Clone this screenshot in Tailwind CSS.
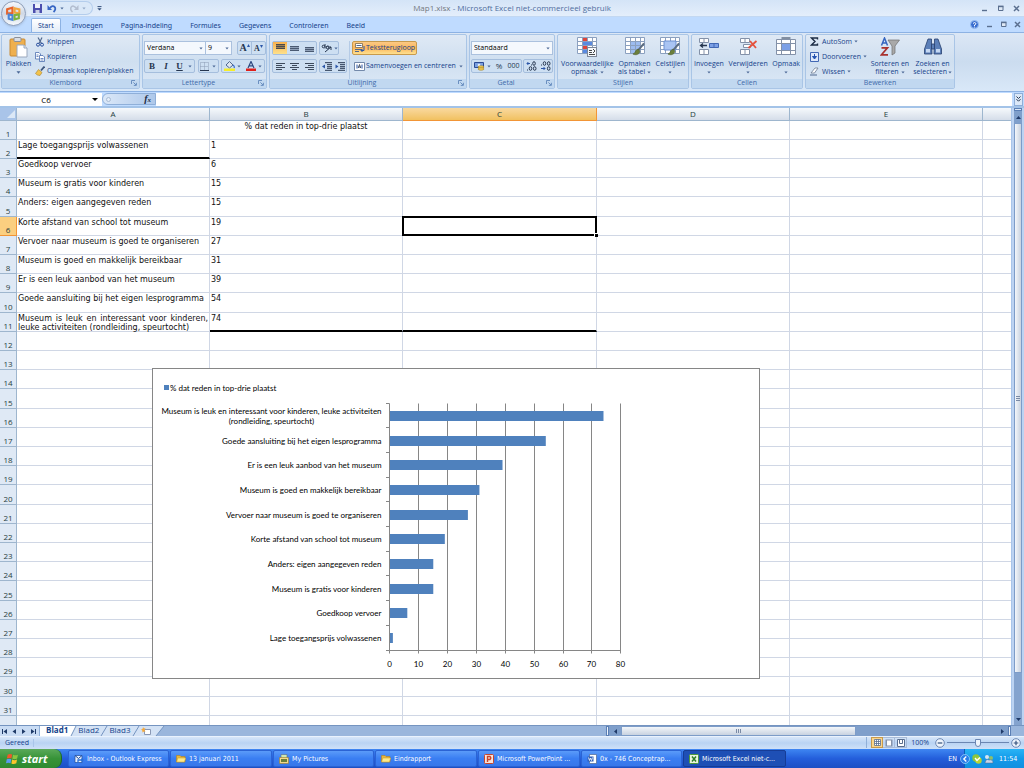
<!DOCTYPE html>
<html lang="nl">
<head>
<meta charset="utf-8">
<title>Map1.xlsx - Microsoft Excel niet-commercieel gebruik</title>
<script src="https://cdn.jsdelivr.net/npm/@tailwindcss/browser@4"></script>
</head>
<body class="flex h-screen flex-col overflow-hidden bg-[#bfdbff] font-['Open_Sans','Noto_Sans',sans-serif] text-[7px] leading-[8px] text-[#15428b]">

<svg class="hidden">
  <defs>
    <symbol id="dn" viewBox="0 0 5 3"><path d="M.5 .3h4L2.500 2.800z" fill="#4a6796"/></symbol>
    <symbol id="launch" viewBox="0 0 6 6"><path d="M.5 4V.5H4" fill="none" stroke="#6a8fc0"/><path d="M2.400 2.400l2.600 2.600M5.400 2.800v2.600H2.800" fill="none" stroke="#6a8fc0"/></symbol>
    <symbol id="min" viewBox="0 0 7 7"><path d="M1 5.500h5" stroke="#5a6f8f" stroke-width="1.400"/></symbol>
    <symbol id="max" viewBox="0 0 7 7"><path d="M1.500 1.500h4.500v4h-4.500z" fill="#dfe9f5" stroke="#5a6f8f"/><path d="M1 1.400h5.500" stroke="#5a6f8f" stroke-width="1.600"/></symbol>
    <symbol id="cls" viewBox="0 0 7 7"><path d="M1 1l5 5M6 1L1 6" stroke="#5a6f8f" stroke-width="1.500"/></symbol>
    <symbol id="grid" viewBox="0 0 20 18"><path d="M.5 .5h19v16H.5z" fill="#fff" stroke="#8ba0bf"/><path d="M5.500 .5v16M10.500 .5v16M15.500 .5v16M.5 4.500h19M.5 8.500h19M.5 12.500h19" stroke="#8ba0bf" fill="none"/></symbol>
    <symbol id="brush" viewBox="0 0 14 14"><path d="M13 1L6.500 8.500" stroke="#5c6d80" stroke-width="2.200"/><path d="M7 7.500c-3-1-3 4-6 5 3 1.500 7 .5 7.500-3z" fill="#6b7f3a" stroke="#4b5a2a" stroke-width=".6"/></symbol>
    <symbol id="folder" viewBox="0 0 10 9"><path d="M.5 1.500h3.500l1 1H9v5.500H.5z" fill="#e9b63c" stroke="#b5851c" stroke-width=".6"/><path d="M1.800 4h8l-1.500 4H.6z" fill="#fde98a" stroke="#c79a2a" stroke-width=".5"/></symbol>
    <symbol id="flag" viewBox="0 0 12 11"><path d="M1.500 1.600Q3.500.3 5.700 1.400L5 5Q3 4 .8 5z" fill="#f0572c"/><path d="M6.500 1.600q2.200 1 4.500-.1L10.300 5Q8 6.200 5.800 5.200z" fill="#8cc63f"/><path d="M.7 5.800Q2.800 4.800 4.900 5.800L4.200 9.400Q2.200 8.400 0 9.400z" fill="#5a9bf0"/><path d="M5.600 6q2.300 1.100 4.600 0L9.500 9.500Q7.200 10.600 5 9.600z" fill="#fcc62c"/></symbol>
  </defs>
</svg>

<!-- Title bar -->
<header class="relative flex h-[17px] shrink-0 items-center border-b border-[#c3d8f2] bg-gradient-to-b from-[#d4e4f7] to-[#e4eefb] pl-[31px] pr-[4px]">
  <button aria-label="Office-knop" class="absolute left-[1px] top-[1px] z-10 flex size-[25px] items-center justify-center rounded-full border border-[#8c9db8] bg-gradient-to-b from-[#f7f9fc] via-[#cfd8e6] to-[#f6f9fd] shadow">
    <svg class="size-[17px]" viewBox="0 0 16 16" fill="none" stroke-width="2"><path d="M2 4l5-1.500v5L2 8z" stroke="#e8642a"/><path d="M9 3l4.500 1v4L9 7z" stroke="#f2a63b"/><path d="M3.500 9l3.500.5V14l-3.500-1z" stroke="#4a86d8"/><path d="M9 9.500l4-.5v3.500l-4 1z" stroke="#7db33c"/></svg>
  </button>
  <div class="flex h-[14px] items-center gap-[5px] rounded-r-full border border-[#b4cdec] border-l-0 bg-[#dae8f8] pl-[2px] pr-[6px]">
    <button aria-label="Opslaan"><svg class="size-[9px]" viewBox="0 0 9 9"><path d="M0 0h9v9H0z" fill="#4c4fae"/><path d="M2 0h5v4H2z" fill="#eef1fa"/><path d="M2.500 6h4v3h-4z" fill="#c9cfe8"/></svg></button>
    <button aria-label="Ongedaan maken" class="flex items-center gap-[3px]"><svg class="h-[9px] w-[10px]" viewBox="0 0 10 9"><path d="M3 4C6-.5 11 4 6.500 8" fill="none" stroke="#3866c4" stroke-width="1.800"/><path d="M.5 1v5h4.500z" fill="#3866c4"/></svg><svg class="h-[3px] w-[4px]"><use href="#dn"/></svg></button>
    <button aria-label="Opnieuw" class="flex items-center gap-[3px]"><svg class="h-[9px] w-[10px]" viewBox="0 0 10 9"><path d="M7 4C4-.5-1 4 3.500 8" fill="none" stroke="#b3bed0" stroke-width="1.500"/><path d="M9.500 1v5H5z" fill="#b3bed0"/></svg><svg class="h-[3px] w-[4px] opacity-50"><use href="#dn"/></svg></button>
  </div>
  <button aria-label="Werkbalk aanpassen" class="ml-[4px]"><svg class="size-[5px]" viewBox="0 0 5 5"><path d="M.5 .6h4" stroke="#34507c"/><path d="M.3 2.200h4.400L2.500 4.600z" fill="#34507c"/></svg></button>
  <h1 class="absolute inset-x-0 text-center text-[8px] text-[#4f6d9e]"><span class="text-[#73797f]">Map1.xlsx</span> - Microsoft Excel niet-commercieel gebruik</h1>
  <div class="relative ml-auto flex gap-[9px]">
    <button aria-label="Minimaliseren"><svg class="size-[7px]"><use href="#min"/></svg></button>
    <button aria-label="Verkleinen"><svg class="size-[7px]"><use href="#max"/></svg></button>
    <button aria-label="Sluiten"><svg class="size-[7px]"><use href="#cls"/></svg></button>
  </div>
</header>

<!-- Ribbon tabs -->
<nav class="flex h-[15px] shrink-0 items-end gap-[4px] bg-[#bfdbff] pl-[31px] pr-[3px] font-['Noto_Sans',sans-serif]">
  <a href="#" class="rounded-t-[2px] border border-b-0 border-[#8db2e3] bg-gradient-to-b from-white to-[#e2ecf8] px-[6px] pb-[2px] pt-[3px]">Start</a>
  <a href="#" class="px-[7px] pb-[2px]">Invoegen</a>
  <a href="#" class="px-[7px] pb-[2px]">Pagina-indeling</a>
  <a href="#" class="px-[7px] pb-[2px]">Formules</a>
  <a href="#" class="px-[7px] pb-[2px]">Gegevens</a>
  <a href="#" class="px-[7px] pb-[2px]">Controleren</a>
  <a href="#" class="px-[7px] pb-[2px]">Beeld</a>
  <div class="ml-auto flex items-center gap-[7px] pb-[3px]">
    <button aria-label="Help"><svg class="size-[9px]" viewBox="0 0 9 9"><circle cx="4.500" cy="4.500" r="4" fill="#3b6fd0" stroke="#9cc0f0"/><path d="M3 3.500q1.500-2 3 0 0 1-1.500 1.500v1M4.500 6.700v.8" stroke="#fff" fill="none"/></svg></button>
    <button aria-label="Venster minimaliseren"><svg class="size-[7px]"><use href="#min"/></svg></button>
    <button aria-label="Venster herstellen"><svg class="size-[7px]"><use href="#max"/></svg></button>
    <button aria-label="Venster sluiten"><svg class="size-[7px]"><use href="#cls"/></svg></button>
  </div>
</nav>

<!-- Ribbon -->
<div class="flex h-[60px] shrink-0 gap-[2px] border-y border-[#8db2e3] bg-gradient-to-b from-[#dce7f5] via-[#cbdcef] to-[#d9e8f8] px-px pb-[2px] pt-px">

  <section class="flex w-[139px] shrink-0 flex-col rounded-[2px] border border-[#a9c5e6] bg-gradient-to-b from-[#dfe9f5] via-[#cfdff0] to-[#dce8f6]">
    <div class="flex flex-1 gap-[3px] pl-[3px]">
      <button class="flex w-[27px] flex-col items-center pt-[2px]">
        <svg class="h-[21px] w-[19px]" viewBox="0 0 19 21"><rect x="1" y="2" width="15" height="17" rx="1" fill="#efb04e" stroke="#c98a33"/><rect x="5" y=".5" width="7" height="4" rx="1" fill="#d9dde4" stroke="#8b8f98"/><path d="M8 8h7l3 3v9H8z" fill="#fff" stroke="#9aa8bd"/><path d="M15 8v3h3" fill="#dce6f3" stroke="#9aa8bd"/></svg>
        <span class="mt-[2px]">Plakken</span>
        <svg class="mt-[3px] h-[3px] w-[5px]"><use href="#dn"/></svg>
      </button>
      <div class="flex flex-col justify-between pb-[3px] pt-[2px]">
        <button class="flex items-center gap-[2px]"><svg class="size-[10px]" viewBox="0 0 10 10" fill="none"><path d="M3 .5l3.500 6M7 .5L4 6.500" stroke="#51698f" stroke-width="1.200"/><circle cx="3" cy="7.700" r="1.500" stroke="#2a4fa0"/><circle cx="7" cy="7.700" r="1.500" stroke="#2a4fa0"/></svg>Knippen</button>
        <button class="flex items-center gap-[2px]"><svg class="size-[10px]" viewBox="0 0 10 10" fill="#fff" stroke="#4b6fb0" stroke-width=".8"><path d="M.5 .5h3.500l1.500 1.500v5h-5z"/><path d="M4.500 3.500h3.500l1.500 1.500v4.500h-5z"/><path d="M5.500 6.500h3M5.500 8h3M1.500 3h2M1.500 4.500h2"/></svg>Kopiëren</button>
        <button class="flex items-center gap-[2px]"><svg class="size-[10px]" viewBox="0 0 10 10"><path d="M9.500 .5L6 4.500" stroke="#3c557e" stroke-width="1.800"/><path d="M3.500 3.500L7 6.500 5 9.500Q2 9.500.5 7.500z" fill="#f3c34c" stroke="#a8812c" stroke-width=".6"/></svg>Opmaak kopiëren/plakken</button>
      </div>
    </div>
    <footer class="relative h-[9px] bg-[#c1d8f0] pr-[10px] text-center text-[#3e6aaa]">Klembord<button aria-label="Klembord-opties" class="absolute right-[2px] top-px"><svg class="size-[6px]"><use href="#launch"/></svg></button></footer>
  </section>

  <section class="flex w-[125px] shrink-0 flex-col rounded-[2px] border border-[#a9c5e6] bg-gradient-to-b from-[#dfe9f5] via-[#cfdff0] to-[#dce8f6]">
    <div class="flex flex-1 flex-col gap-[4px] px-px pt-[6px]">
      <div class="flex gap-[5px]">
        <div class="flex h-[14px] border border-[#abc1de] bg-[#f4f8fd] text-black">
          <div class="relative flex w-[61px] items-center border-r border-[#abc1de]"><select aria-label="Lettertype" class="w-full appearance-none bg-transparent pl-[2px]"><option>Verdana</option></select><svg class="pointer-events-none absolute right-[2px] h-[3px] w-[4px]"><use href="#dn"/></svg></div>
          <div class="relative flex w-[25px] items-center"><select aria-label="Tekengrootte" class="w-full appearance-none bg-transparent pl-[2px]"><option>9</option></select><svg class="pointer-events-none absolute right-[2px] h-[3px] w-[4px]"><use href="#dn"/></svg></div>
        </div>
        <div class="flex h-[14px] rounded-[2px] border border-[#a5bedd] bg-[#cddff2] font-['Liberation_Serif',serif] font-bold text-[#26364f]">
          <button aria-label="Tekengrootte vergroten" class="flex w-[14px] justify-center border-r border-[#a5bedd] pt-[2px] text-[10px]">A<svg class="h-[3px] w-[3px] text-[#2b56a8]" viewBox="0 0 3 3"><path d="M1.500 0L3 3H0z" fill="currentColor"/></svg></button>
          <button aria-label="Tekengrootte verkleinen" class="flex w-[13px] justify-center pt-[3px] text-[8px]">A<svg class="h-[3px] w-[3px] text-[#2b56a8]" viewBox="0 0 3 3"><path d="M1.500 3L3 0H0z" fill="currentColor"/></svg></button>
        </div>
      </div>
      <div class="flex justify-between text-[#26364f]">
        <div class="flex h-[14px] items-center rounded-[2px] border border-[#a5bedd] bg-[#cddff2] font-['Liberation_Serif',serif] text-[9px] font-bold">
          <button class="w-[14px]">B</button><button class="w-[14px] italic">I</button><button class="w-[13px] underline">U</button><button aria-label="Onderstrepingsopties" class="flex w-[8px] justify-center"><svg class="h-[3px] w-[4px]"><use href="#dn"/></svg></button>
        </div>
        <button aria-label="Randen" class="flex h-[14px] w-[21px] items-center justify-center gap-[3px] rounded-[2px] border border-[#a5bedd] bg-[#cddff2]"><svg class="size-[9px]" viewBox="0 0 9 9"><path d="M.5 .5h8v8h-8zM4.500 .5v8M.5 4.500h8" fill="none" stroke="#8a9bb5" stroke-dasharray="1 1"/><path d="M0 8.500h9" stroke="#26364f"/></svg><svg class="h-[3px] w-[4px]"><use href="#dn"/></svg></button>
        <div class="flex h-[14px] items-center rounded-[2px] border border-[#a5bedd] bg-[#cddff2]">
          <button aria-label="Opvulkleur" class="flex w-[21px] items-center justify-center gap-[2px]"><svg class="h-[10px] w-[11px]" viewBox="0 0 11 10"><path d="M2 4l3.500-3.500L9 4 5.500 7z" fill="#dfe6f0" stroke="#51698f"/><path d="M9 4q2 1.500 1 3" stroke="#3b6fd0" fill="none" stroke-width="1.200"/><path d="M0 7.500h11V10H0z" fill="#f6ee2a"/></svg><svg class="h-[3px] w-[4px]"><use href="#dn"/></svg></button>
          <button aria-label="Tekstkleur" class="flex w-[21px] items-center justify-center gap-[2px]"><svg class="h-[10px] w-[10px]" viewBox="0 0 10 10"><path d="M2 7l3-6.500L8 7M3.200 4.800h3.600" fill="none" stroke="#2f4a80" stroke-width="1.200"/><path d="M0 7.500h10V10H0z" fill="#e0201b"/></svg><svg class="h-[3px] w-[4px]"><use href="#dn"/></svg></button>
        </div>
      </div>
    </div>
    <footer class="relative h-[9px] bg-[#c1d8f0] pr-[12px] text-center text-[#3e6aaa]">Lettertype<button aria-label="Lettertype-opties" class="absolute right-[2px] top-px"><svg class="size-[6px]"><use href="#launch"/></svg></button></footer>
  </section>

  <section class="flex w-[198px] shrink-0 flex-col rounded-[2px] border border-[#a9c5e6] bg-gradient-to-b from-[#dfe9f5] via-[#cfdff0] to-[#dce8f6]">
    <div class="flex flex-1 gap-[2px] px-[2px] pt-[6px]">
      <div class="flex flex-col gap-[4px] border-r border-[#b5cbe6] pr-[2px]">
        <div class="flex gap-[2px]">
          <div class="flex h-[14px] rounded-[2px] border border-[#a5bedd] bg-[#cddff2]">
            <button aria-label="Boven uitlijnen" class="flex w-[14px] items-start justify-center bg-gradient-to-b from-[#f7b04c] to-[#fde08a] pt-[2px]"><svg class="h-[5px] w-[9px] bg-[#9a7f55]" viewBox="0 0 9 5"><path d="M0 .5h9M0 2.500h9M0 4.500h9" stroke="#4a4a4c"/></svg></button>
            <button aria-label="Centreren verticaal" class="flex w-[15px] items-center justify-center"><svg class="h-[5px] w-[9px] bg-[#8fa0b8]" viewBox="0 0 9 5"><path d="M0 .5h9M0 2.500h9M0 4.500h9" stroke="#4a5a72"/></svg></button>
            <button aria-label="Onder uitlijnen" class="flex w-[14px] items-end justify-center pb-[2px]"><svg class="h-[5px] w-[9px] bg-[#8fa0b8]" viewBox="0 0 9 5"><path d="M0 .5h9M0 2.500h9M0 4.500h9" stroke="#4a5a72"/></svg></button>
          </div>
          <button aria-label="Afdrukstand" class="flex h-[14px] w-[20px] items-center justify-center gap-[2px] rounded-[2px] border border-[#a5bedd] bg-[#cddff2]"><svg class="h-[10px] w-[11px]" viewBox="0 0 11 10" fill="none" stroke="#26364f"><circle cx="2.500" cy="3.500" r="1.300"/><path d="M4 1v3M4 5.500l3-3"/><circle cx="6.500" cy="4.500" r="1.300"/><path d="M4 9l6-5M10 7V4H7"/></svg><svg class="h-[3px] w-[4px]"><use href="#dn"/></svg></button>
        </div>
        <div class="flex gap-[2px]">
          <div class="flex h-[14px] items-center rounded-[2px] border border-[#a5bedd] bg-[#cddff2]">
            <button aria-label="Links uitlijnen" class="flex w-[14px] justify-center"><svg class="h-[7px] w-[9px]" viewBox="0 0 9 7"><path d="M0 .5h9M0 2.500h6M0 4.500h9M0 6.500h6" stroke="#3d4a5c"/></svg></button>
            <button aria-label="Centreren" class="flex w-[15px] justify-center"><svg class="h-[7px] w-[9px]" viewBox="0 0 9 7"><path d="M0 .5h9M2 2.500h5M0 4.500h9M2 6.500h5" stroke="#3d4a5c"/></svg></button>
            <button aria-label="Rechts uitlijnen" class="flex w-[14px] justify-center"><svg class="h-[7px] w-[9px]" viewBox="0 0 9 7"><path d="M0 .5h9M3 2.500h6M0 4.500h9M3 6.500h6" stroke="#3d4a5c"/></svg></button>
          </div>
          <div class="flex h-[14px] items-center rounded-[2px] border border-[#a5bedd] bg-[#cddff2]">
            <button aria-label="Inspringing verkleinen" class="flex w-[13px] justify-center"><svg class="h-[9px] w-[10px]" viewBox="0 0 10 9"><path d="M3 .7h7M5 2.700h5M5 4.700h5M5 6.300h5M3 8.300h7" stroke="#26364f"/><path d="M0 4.500L3 2.500v4z" fill="#2b56a8"/></svg></button>
            <button aria-label="Inspringing vergroten" class="flex w-[13px] justify-center"><svg class="h-[9px] w-[10px]" viewBox="0 0 10 9"><path d="M3 .7h7M5 2.700h5M5 4.700h5M5 6.300h5M3 8.300h7" stroke="#26364f"/><path d="M3.500 4.500L.5 2.500v4z" fill="#2b56a8"/></svg></button>
          </div>
        </div>
      </div>
      <div class="flex flex-col items-start gap-[4px]">
        <button class="flex h-[14px] items-center gap-px whitespace-nowrap rounded-[2px] border border-[#c89a4c] bg-gradient-to-b from-[#fbc985] via-[#fcb65a] to-[#fde08f] px-px"><svg class="h-[10px] w-[11px]" viewBox="0 0 11 10"><path d="M1.500 .5h7v4h-7z" fill="#fff" stroke="#7a6a4c" stroke-width=".8"/><path d="M2.500 2.500h5M1 6.500h7M1 8.500h4" stroke="#51698f"/><path d="M10 3v4.500H7M8.500 6L7 7.500 8.500 9" fill="none" stroke="#2b56a8"/></svg>Tekstterugloop</button>
        <button class="flex h-[14px] items-center gap-px whitespace-nowrap pl-[2px]"><svg class="h-[9px] w-[11px] shrink-0" viewBox="0 0 11 9"><path d="M.5 .5h10v8H.5z" fill="#fff" stroke="#7389aa"/><path d="M3 2.500v4M8 2.500v4" stroke="#2b56a8"/><path d="M4.300 6l1.200-3.500L6.700 6M4.500 5h2" stroke="#26364f" fill="none" stroke-width=".8"/></svg>Samenvoegen en centreren<svg class="ml-[2px] h-[3px] w-[4px] shrink-0"><use href="#dn"/></svg></button>
      </div>
    </div>
    <footer class="relative h-[9px] bg-[#c1d8f0] pr-[12px] text-center text-[#3e6aaa]">Uitlijning<button aria-label="Uitlijningsopties" class="absolute right-[2px] top-px"><svg class="size-[6px]"><use href="#launch"/></svg></button></footer>
  </section>

  <section class="flex w-[86px] shrink-0 flex-col rounded-[2px] border border-[#a9c5e6] bg-gradient-to-b from-[#dfe9f5] via-[#cfdff0] to-[#dce8f6]">
    <div class="flex flex-1 flex-col gap-[4px] px-px pt-[6px]">
      <div class="relative flex h-[14px] items-center border border-[#abc1de] bg-[#f4f8fd] text-black"><select aria-label="Getalnotatie" class="w-full appearance-none bg-transparent pl-[2px]"><option>Standaard</option></select><svg class="pointer-events-none absolute right-[2px] h-[3px] w-[4px]"><use href="#dn"/></svg></div>
      <div class="flex justify-between text-[#26364f]">
        <div class="flex h-[14px] items-center rounded-[2px] border border-[#a5bedd] bg-[#cddff2]">
          <button aria-label="Financiële notatie" class="flex w-[20px] items-center justify-center gap-[2px]"><svg class="size-[11px]" viewBox="0 0 11 11"><path d="M.5 1.500h9v5h-9z" fill="#7ba0e0" stroke="#2c4b94"/><circle cx="5" cy="4" r="1.300" fill="#e4edfb"/><ellipse cx="7" cy="6" rx="3" ry="1.200" fill="#f6d35a" stroke="#a07a1c" stroke-width=".6"/><ellipse cx="7" cy="8" rx="3" ry="1.200" fill="#f6d35a" stroke="#a07a1c" stroke-width=".6"/></svg><svg class="h-[3px] w-[4px]"><use href="#dn"/></svg></button>
          <button class="w-[14px] text-[8px]">%</button><button class="w-[15px]">000</button>
        </div>
        <div class="flex h-[14px] items-center rounded-[2px] border border-[#a5bedd] bg-[#cddff2]">
          <button aria-label="Meer decimalen" class="flex w-[14px] justify-center"><svg class="h-[10px] w-[11px]" viewBox="0 0 11 10" fill="none" stroke="#26364f"><path d="M1 2.500h3M2.300 1L1 2.500 2.300 4" stroke="#2b56a8"/><ellipse cx="8" cy="2.500" rx="1.300" ry="1.800"/><ellipse cx="4.500" cy="7.500" rx="1.300" ry="1.800"/><ellipse cx="8.700" cy="7.500" rx="1.300" ry="1.800"/><path d="M1 9h1M5 4h1"/></svg></button>
          <button aria-label="Minder decimalen" class="flex w-[14px] justify-center"><svg class="h-[10px] w-[11px]" viewBox="0 0 11 10" fill="none" stroke="#26364f"><ellipse cx="4.500" cy="2.500" rx="1.300" ry="1.800"/><ellipse cx="8.700" cy="2.500" rx="1.300" ry="1.800"/><ellipse cx="8.700" cy="7.500" rx="1.300" ry="1.800"/><path d="M1 7.500h4M3.500 6L5 7.500 3.500 9" stroke="#2b56a8"/><path d="M1 4h1"/></svg></button>
        </div>
      </div>
    </div>
    <footer class="relative h-[9px] bg-[#c1d8f0] pr-[12px] text-center text-[#3e6aaa]">Getal<button aria-label="Getalopties" class="absolute right-[2px] top-px"><svg class="size-[6px]"><use href="#launch"/></svg></button></footer>
  </section>

  <section class="flex w-[132px] shrink-0 flex-col rounded-[2px] border border-[#a9c5e6] bg-gradient-to-b from-[#dfe9f5] via-[#cfdff0] to-[#dce8f6]">
    <div class="flex flex-1 justify-between px-[3px] pt-[2px]">
      <button class="flex flex-col items-center"><svg class="h-[20px] w-[20px]" viewBox="0 0 20 20"><use href="#grid" width="20" height="18"/><path d="M6 1h4v3H6zM6 9h4v3H6z" fill="#e0443a"/><path d="M6 5h9v3H6zM6 13h4v3H6z" fill="#5a8ae0"/><rect x="10.500" y="10.500" width="9" height="9" fill="#f6f8fb" stroke="#7d8797"/><path d="M12 13.500h3M12 15.500h3M12 17.500h6M16 12l2 2-2 2" stroke="#333" fill="none" stroke-width=".9"/></svg><span class="mt-[3px]">Voorwaardelijke</span><span class="flex items-center gap-[2px]">opmaak<svg class="h-[3px] w-[4px]"><use href="#dn"/></svg></span></button>
      <button class="flex flex-col items-center"><svg class="h-[20px] w-[20px]" viewBox="0 0 20 20"><use href="#grid" width="20" height="18"/><path d="M6 5h4v3H6zM11 5h4v3h-4zM6 9h4v3H6zM11 9h4v3h-4zM6 13h4v3H6zM11 13h4v3h-4z" fill="#9dbcf0"/><use href="#brush" x="7" y="5" width="13" height="14"/></svg><span class="mt-[3px]">Opmaken</span><span class="flex items-center gap-[2px]">als tabel<svg class="h-[3px] w-[4px]"><use href="#dn"/></svg></span></button>
      <button class="flex flex-col items-center"><svg class="h-[20px] w-[20px]" viewBox="0 0 20 20"><use href="#grid" width="20" height="18"/><path d="M4 4h12v9H4z" fill="#a9c4f3" stroke="#6d8fd0"/><use href="#brush" x="7" y="5" width="13" height="14"/></svg><span class="mt-[3px]">Celstijlen</span><svg class="mt-[3px] h-[3px] w-[4px]"><use href="#dn"/></svg></button>
    </div>
    <footer class="h-[9px] bg-[#c1d8f0] text-center text-[#3e6aaa]">Stijlen</footer>
  </section>

  <section class="flex w-[112px] shrink-0 flex-col rounded-[2px] border border-[#a9c5e6] bg-gradient-to-b from-[#dfe9f5] via-[#cfdff0] to-[#dce8f6]">
    <div class="flex flex-1 justify-between px-[2px] pt-[2px]">
      <button class="flex flex-col items-center"><svg class="h-[20px] w-[20px]" viewBox="0 0 20 20" fill="#fff" stroke="#8391a8"><path d="M.5 1.500h9v4h-9zM5 1.500v4M.5 12.500h9v5h-9zM5 12.500v5"/><path d="M10.500 6.500h9v4h-9zM15 6.500v4" fill="#7ca0e6" stroke="#4268b4"/><path d="M2 8.500h6M4 6.500l-2.500 2L4 10.500" stroke="#26364f" fill="none" stroke-width="1.300"/></svg><span class="mt-[3px]">Invoegen</span><svg class="mt-[3px] h-[3px] w-[4px]"><use href="#dn"/></svg></button>
      <button class="flex flex-col items-center"><svg class="h-[20px] w-[20px]" viewBox="0 0 20 20" fill="#fff" stroke="#8391a8"><path d="M2.500 1.500h9v4h-9zM7 1.500v4M5.500 7.500h7v3h-7zM2.500 12.500h9v5h-9zM7 12.500v5"/><path d="M12 4l6 7M18.500 4l-8 7" stroke="#e4513c" stroke-width="1.800" fill="none"/></svg><span class="mt-[3px]">Verwijderen</span><svg class="mt-[3px] h-[3px] w-[4px]"><use href="#dn"/></svg></button>
      <button class="flex flex-col items-center"><svg class="h-[20px] w-[20px]" viewBox="0 0 20 20" fill="#fff" stroke="#8391a8"><path d="M.5 2.500h19v15H.5zM.5 6.500h19M.5 13.500h19M5.500 2.500v15M14.500 2.500v15"/><path d="M6 7h8v6H6z" fill="#7ca0e6" stroke="none"/><path d="M5.500 1h9" stroke="#26364f"/></svg><span class="mt-[3px]">Opmaak</span><svg class="mt-[3px] h-[3px] w-[4px]"><use href="#dn"/></svg></button>
    </div>
    <footer class="h-[9px] bg-[#c1d8f0] text-center text-[#3e6aaa]">Cellen</footer>
  </section>

  <section class="flex w-[150px] shrink-0 flex-col rounded-[2px] border border-[#a9c5e6] bg-gradient-to-b from-[#dfe9f5] via-[#cfdff0] to-[#dce8f6]">
    <div class="flex flex-1 justify-between pl-[4px] pr-[2px]">
      <div class="flex flex-col justify-between pb-[3px] pt-[2px]">
        <button class="flex items-center gap-[2px]"><svg class="mr-px h-[9px] w-[9px]" viewBox="0 0 9 9"><path d="M7.500 2.500V1h-6L5 4.500 1.500 8h6V6.500" fill="none" stroke="#1d2c44" stroke-width="1.400"/></svg>AutoSom<svg class="h-[3px] w-[4px]"><use href="#dn"/></svg></button>
        <button class="flex items-center gap-[2px]"><svg class="mr-px h-[10px] w-[9px]" viewBox="0 0 9 10"><path d="M.5 .5h8v9h-8z" fill="#dfe9fa" stroke="#4268b4"/><path d="M4.500 2v4M2.500 4.500l2 2.500 2-2.500z" stroke="#2453b0" fill="#2453b0"/></svg>Doorvoeren<svg class="h-[3px] w-[4px]"><use href="#dn"/></svg></button>
        <button class="flex items-center gap-[2px]"><svg class="mr-px h-[9px] w-[9px]" viewBox="0 0 9 9"><path d="M1 6l4-5h3L4.500 6z" fill="#fff" stroke="#6d7b92" stroke-width=".8"/><path d="M0 8h7" stroke="#51698f"/></svg>Wissen<svg class="h-[3px] w-[4px]"><use href="#dn"/></svg></button>
      </div>
      <div class="flex gap-[4px] pt-[2px]">
        <button class="flex flex-col items-center"><svg class="h-[20px] w-[20px]" viewBox="0 0 20 20"><path d="M1.500 8.500L4.500 1l3 7.500M2.500 6h4" fill="none" stroke="#3566c0" stroke-width="1.500"/><path d="M1.500 10.800h6l-6 7h6.500" fill="none" stroke="#a8322e" stroke-width="1.700"/><path d="M8 3h11.500l-4.500 6v7l-3 2V9z" fill="#a9a9a9" stroke="#6e6e6e" stroke-width=".7"/></svg><span class="mt-[3px]">Sorteren en</span><span class="flex items-center gap-[2px]">filteren<svg class="h-[3px] w-[4px]"><use href="#dn"/></svg></span></button>
        <button class="flex flex-col items-center"><svg class="h-[20px] w-[20px]" viewBox="0 0 20 20" fill="#5b7fb8" stroke="#27406e" stroke-width=".8"><path d="M5 2h3.500v4L9 17H1.500v-5zM11.500 2H15l3.500 10v5H11l.5-11z"/><path d="M8.500 7h3v5h-3z"/><path d="M3 12h4v3.500H3zM13 12h4v3.500h-4z" fill="#c5d8f2" stroke="none"/></svg><span class="mt-[3px]">Zoeken en</span><span class="flex items-center gap-px">selecteren<svg class="h-[3px] w-[4px]"><use href="#dn"/></svg></span></button>
      </div>
    </div>
    <footer class="h-[9px] bg-[#c1d8f0] text-center text-[#3e6aaa]">Bewerken</footer>
  </section>
</div>

<!-- Formula bar -->
<div class="flex h-[16px] shrink-0 items-center border-b-2 border-[#a3c3e8] bg-[#bfdbff] pr-px">
  <div class="flex h-[13px] w-[102px] items-center bg-white text-black">
    <input aria-label="Naamvak" value="C6" class="w-[92px] bg-white text-center text-[8px]">
    <svg class="h-[3px] w-[6px]" preserveAspectRatio="none" viewBox="0 0 6 3"><path d="M0 0h6L3 3z"/></svg>
  </div>
  <div class="flex h-[12px] w-[54px] items-center justify-between rounded-l-full border border-[#8fafd8] bg-gradient-to-r from-[#dbe8f8] to-[#aec8ea] pl-[3px] pr-[4px]">
    <span class="size-[5px] rounded-full border border-[#a9bbd4] bg-[#e3edf9]"></span>
    <button aria-label="Functie invoegen" class="flex items-baseline font-['Liberation_Serif',serif] text-[10px] font-bold italic text-[#1d2c44]">f<span class="text-[7px]">x</span></button>
  </div>
  <input aria-label="Formulebalk" class="h-[13px] min-w-0 flex-1 bg-white text-black">
  <button aria-label="Formulebalk uitvouwen" class="ml-[2px] flex h-[13px] w-[9px] items-center justify-center border border-[#8fafd8] bg-[#dbe8f8]"><svg class="h-[6px] w-[5px]" viewBox="0 0 5 6"><path d="M.5 .5l2 2 2-2M.5 3.200l2 2 2-2" fill="none" stroke="#26364f"/></svg></button>
</div>

<!-- Worksheet -->
<main class="flex min-h-0 flex-1">
  <div class="relative min-w-0 flex-1 overflow-hidden bg-white font-['DejaVu_Sans',sans-serif] text-[8px] leading-[10px] text-[#111]">
    <table class="w-full table-fixed border-separate border-spacing-0">
      <colgroup><col class="w-[17px]"><col class="w-[193px]"><col class="w-[193px]"><col class="w-[194px]"><col class="w-[193px]"><col class="w-[193px]"><col></colgroup>
      <thead>
        <tr class="h-[13px] font-['Open_Sans',sans-serif] text-[#27413e]">
          <th class="border-b border-r border-[#9eb6ce] bg-[#a9c4e9] p-0"><svg class="ml-auto mr-px size-[8px]" viewBox="0 0 8 8"><path d="M8 0v8H0z" fill="#dce8f6"/></svg></th>
          <th class="border-b border-r border-[#9eb6ce] bg-gradient-to-b from-[#f6f9fc] to-[#d5dde9] p-0 font-normal">A</th>
          <th class="border-b border-r border-[#9eb6ce] bg-gradient-to-b from-[#f6f9fc] to-[#d5dde9] p-0 font-normal">B</th>
          <th class="border-b border-r border-[#f29536] bg-gradient-to-b from-[#f9d99f] to-[#f1c15f] p-0 font-normal">C</th>
          <th class="border-b border-r border-[#9eb6ce] bg-gradient-to-b from-[#f6f9fc] to-[#d5dde9] p-0 font-normal">D</th>
          <th class="border-b border-r border-[#9eb6ce] bg-gradient-to-b from-[#f6f9fc] to-[#d5dde9] p-0 font-normal">E</th>
          <th class="border-b border-[#9eb6ce] bg-gradient-to-b from-[#f6f9fc] to-[#d5dde9] p-0"></th>
        </tr>
      </thead>
      <tbody id="rows"></tbody>
    </table>

    <!-- Floating chart object -->
    <figure class="absolute left-[152px] top-[260px] h-[311px] w-[608px] border border-[#868686] bg-white">
      <svg id="chart" class="block size-full font-['Lato',sans-serif] text-[8px]" viewBox="153 369 606 309" role="img" aria-label="% dat reden in top-drie plaatst">
        <rect x="164" y="385" width="5" height="5" fill="#4f81bd"/>
        <text x="170" y="391">% dat reden in top-drie plaatst</text>
      </svg>
    </figure>
  </div>

  <!-- Vertical scroll bar -->
  <div class="flex w-[13px] flex-col items-center border-l border-[#a9c5ea] bg-[#bcd3f2] px-[2px]">
    <span class="h-[3px] w-full border border-[#5b7fb5] bg-[#dce8f6]"></span>
    <button aria-label="Omhoog schuiven" class="flex h-[12px] w-full items-center justify-center bg-[#7f9fcb]"><svg class="h-[3px] w-[5px]" viewBox="0 0 5 3"><path d="M2.500 0L5 3H0z" fill="#1f3a68"/></svg></button>
    <div class="flex w-full flex-[549] flex-col items-center justify-center gap-px border border-[#7d9cc8] bg-gradient-to-r from-[#f3f6fa] to-[#c8d2e0]">
      <i class="h-px w-[4px] bg-[#7a8aa5]"></i><i class="h-px w-[4px] bg-[#7a8aa5]"></i><i class="h-px w-[4px] bg-[#7a8aa5]"></i>
    </div>
    <div class="w-full flex-[40] bg-[#84a3ce]"></div>
    <button aria-label="Omlaag schuiven" class="flex h-[12px] w-full items-center justify-center bg-[#84a3ce]"><svg class="h-[3px] w-[5px]" viewBox="0 0 5 3"><path d="M2.500 3L5 0H0z" fill="#1f3a68"/></svg></button>
  </div>
</main>

<!-- Sheet tabs and horizontal scroll bar -->
<div class="flex h-[11px] shrink-0 border-t border-[#7594c0] bg-[#9ab6dc] pr-[13px]">
  <div class="flex flex-[606] items-stretch">
    <div class="flex w-[40px] items-center justify-around border-r border-[#8fafd8] bg-[#c9dcf4] pr-px text-[#1f3a68]">
      <button aria-label="Eerste blad"><svg class="size-[5px]" viewBox="0 0 5 5"><path d="M.5 0v5" stroke="currentColor"/><path d="M5 0v5L1.500 2.500z" fill="currentColor"/></svg></button>
      <button aria-label="Vorig blad"><svg class="size-[5px]" viewBox="0 0 5 5"><path d="M4 0v5L.5 2.500z" fill="currentColor"/></svg></button>
      <button aria-label="Volgend blad"><svg class="size-[5px]" viewBox="0 0 5 5"><path d="M1 0v5l3.500-2.500z" fill="currentColor"/></svg></button>
      <button aria-label="Laatste blad"><svg class="size-[5px]" viewBox="0 0 5 5"><path d="M4.500 0v5" stroke="currentColor"/><path d="M0 0v5l3.500-2.500z" fill="currentColor"/></svg></button>
    </div>
    <div class="flex items-start bg-[#d3e2f5] text-[8px]">
      <a href="#" class="h-full bg-white pl-[6px] pr-[2px] font-bold">Blad1</a>
      <svg class="h-full w-[8px]" viewBox="0 0 8 10" preserveAspectRatio="none"><path d="M0 0h6L1 10H0z" fill="#fff"/><path d="M6 0L1 10" stroke="#7594c0"/></svg>
      <a href="#">Blad2</a>
      <svg class="mx-px h-full w-[8px]" viewBox="0 0 8 10" preserveAspectRatio="none"><path d="M7 0L1 10" stroke="#7594c0"/></svg>
      <a href="#">Blad3</a>
      <svg class="mx-px h-full w-[8px]" viewBox="0 0 8 10" preserveAspectRatio="none"><path d="M7 0L1 10" stroke="#7594c0"/></svg>
      <button aria-label="Werkblad invoegen" class="pt-px"><svg class="h-[8px] w-[12px]" viewBox="0 0 12 8"><path d="M3.500 2.500h6v5h-6z" fill="#fff" stroke="#8a99b5"/><path d="M2 0l1 1.500L4.500 1 3.500 3l1 1.500H3L1.500 5.500 1.300 3.500 0 2.500l1.500-.5z" fill="#f6a93b"/></svg></button>
    </div>
    <svg class="h-full w-[12px]" viewBox="0 0 12 10" preserveAspectRatio="none"><path d="M0 0h11L3 10H0z" fill="#d3e2f5"/><path d="M11 0L3 10" stroke="#7594c0"/></svg>
  </div>
  <div class="flex flex-[405] items-stretch">
    <span class="w-[3px] border border-[#5b7fb5] bg-[#eef4fb]"></span>
    <button aria-label="Naar links" class="flex w-[12px] items-center justify-center bg-[#7f9fcb]"><svg class="size-[5px]" viewBox="0 0 5 5"><path d="M4 0v5L1 2.500z" fill="#1f3a68"/></svg></button>
    <div class="flex flex-[233] items-center justify-center gap-px border border-[#7d9cc8] bg-gradient-to-b from-[#f3f6fa] to-[#c8d2e0]"><i class="h-[4px] w-px bg-[#7a8aa5]"></i><i class="h-[4px] w-px bg-[#7a8aa5]"></i><i class="h-[4px] w-px bg-[#7a8aa5]"></i></div>
    <div class="flex-[141] bg-[#7f9fcb]"></div>
    <button aria-label="Naar rechts" class="flex w-[11px] items-center justify-center bg-[#7f9fcb]"><svg class="size-[5px]" viewBox="0 0 5 5"><path d="M1 0v5l3-2.500z" fill="#1f3a68"/></svg></button>
    <span class="w-[3px] border border-[#5b7fb5] bg-[#eef4fb]"></span>
  </div>
</div>

<!-- Status bar -->
<div class="flex h-[13px] shrink-0 items-center border-t border-[#e9f2fd] bg-gradient-to-b from-[#d7e6f9] via-[#b9d3f3] to-[#cfe1f8] pb-px">
  <span class="w-[34px] border-r border-[#a9c5ea] pl-[5px]">Gereed</span>
  <div class="ml-auto flex items-center border-l border-[#8fafd8] pl-[4px]">
    <button aria-label="Normaal" class="flex h-[11px] w-[12px] items-center justify-center border border-[#c89a4c] bg-[#fbd68b]"><svg class="size-[7px]" viewBox="0 0 7 7"><path d="M.5 .5h6v6h-6zM.5 2.500h6M.5 4.500h6M2.500 .5v6M4.500 .5v6" fill="#fff" stroke="#5a6f8f" stroke-width=".8"/></svg></button>
    <button aria-label="Pagina-indeling" class="flex h-[11px] w-[12px] items-center justify-center border border-l-0 border-[#a9bcd8]"><svg class="size-[8px]" viewBox="0 0 8 8"><path d="M.5 .5h7v7h-7z" fill="#8593ab"/><path d="M2 1.500h4v5H2z" fill="#fff"/></svg></button>
    <button aria-label="Pagina-eindevoorbeeld" class="flex h-[11px] w-[12px] items-center justify-center border border-l-0 border-[#a9bcd8]"><svg class="size-[8px]" viewBox="0 0 8 8"><path d="M.5 .5h7v7h-7z" fill="#fff" stroke="#5a6f8f"/><path d="M2.500 .5v4h3v-4" fill="none" stroke="#5a6f8f"/></svg></button>
    <button class="ml-[4px]">100%</button>
    <button aria-label="Uitzoomen" class="ml-[6px]"><svg class="size-[10px]" viewBox="0 0 10 10"><circle cx="5" cy="5" r="4.300" fill="#eef4fc" stroke="#6b86b2"/><path d="M2.700 5h4.600" stroke="#34507c" stroke-width="1.200"/></svg></button>
    <input type="range" aria-label="Zoomniveau" value="50" class="mx-[2px] h-[10px] w-[62px] appearance-none bg-[linear-gradient(#6b86b2,#6b86b2)] bg-[length:100%_1px] bg-center bg-no-repeat [&::-webkit-slider-thumb]:h-[8px] [&::-webkit-slider-thumb]:w-[6px] [&::-webkit-slider-thumb]:appearance-none [&::-webkit-slider-thumb]:rounded-b-full [&::-webkit-slider-thumb]:border [&::-webkit-slider-thumb]:border-[#6b86b2] [&::-webkit-slider-thumb]:bg-[#eef4fc]">
    <button aria-label="Inzoomen" class="mr-[3px]"><svg class="size-[10px]" viewBox="0 0 10 10"><circle cx="5" cy="5" r="4.300" fill="#eef4fc" stroke="#6b86b2"/><path d="M2.700 5h4.600M5 2.700v4.600" stroke="#34507c" stroke-width="1.200"/></svg></button>
  </div>
</div>

<!-- Taskbar -->
<footer class="flex h-[19px] shrink-0 items-stretch bg-gradient-to-b from-[#3f86f2] via-[#245edb] to-[#1d4fc4] font-['DejaVu_Sans_Condensed','DejaVu_Sans',sans-serif] text-white">
  <button class="flex w-[62px] shrink-0 items-center gap-[3px] rounded-r-[8px] border-r border-[#1d6b22] bg-gradient-to-b from-[#5aa95a] via-[#379338] to-[#2f8a30] pl-[6px] font-['Open_Sans',sans-serif] text-[11px] font-bold italic"><svg class="h-[12px] w-[13px]"><use href="#flag"/></svg>start</button>
  <div class="flex min-w-0 flex-1 gap-px whitespace-nowrap py-px pl-[6px]">
    <button class="flex w-[101px] items-center gap-[3px] rounded-[2px] border border-[#2b63d4] bg-gradient-to-b from-[#5b9bf9] via-[#3a7ef2] to-[#3877ea] pl-[5px]"><svg class="size-[10px]" viewBox="0 0 10 10"><path d="M1 1.500h7v7H1z" fill="#e8f0fb" stroke="#1c4a9c" stroke-width=".7"/><path d="M1 1.500l3.500 3L8 1.500" fill="none" stroke="#1c4a9c"/><path d="M4 9V6h5M7.500 4.500L9 6 7.500 7.500" fill="none" stroke="#2a6fd6" stroke-width="1.300"/></svg>Inbox - Outlook Express</button>
    <button class="flex w-[102px] items-center gap-[3px] rounded-[2px] border border-[#2b63d4] bg-gradient-to-b from-[#5b9bf9] via-[#3a7ef2] to-[#3877ea] pl-[5px]"><svg class="h-[9px] w-[10px]"><use href="#folder"/></svg>13 januari 2011</button>
    <button class="flex w-[101px] items-center gap-[3px] rounded-[2px] border border-[#2b63d4] bg-gradient-to-b from-[#5b9bf9] via-[#3a7ef2] to-[#3877ea] pl-[5px]"><svg class="size-[10px]" viewBox="0 0 10 10"><path d="M2 .5h6v4H2z" fill="#cfe8b0" stroke="#51698f" stroke-width=".6"/><path d="M.5 3.500h9v6h-9z" fill="#f3d98a" stroke="#9a7a2c" stroke-width=".6"/><path d="M2 5h6v3H2z" fill="#6b7f3a"/></svg>My Pictures</button>
    <button class="flex w-[102px] items-center gap-[3px] rounded-[2px] border border-[#2b63d4] bg-gradient-to-b from-[#5b9bf9] via-[#3a7ef2] to-[#3877ea] pl-[5px]"><svg class="h-[9px] w-[10px]"><use href="#folder"/></svg>Eindrapport</button>
    <button class="flex w-[102px] items-center gap-[3px] rounded-[2px] border border-[#2b63d4] bg-gradient-to-b from-[#5b9bf9] via-[#3a7ef2] to-[#3877ea] pl-[5px]"><svg class="size-[10px]" viewBox="0 0 10 10"><rect x=".5" y=".5" width="9" height="9" rx="1" fill="#fbe3da" stroke="#c9452a"/><path d="M3.500 8V2.500H6q1.500 1.500 0 3H3.500" fill="none" stroke="#c9452a" stroke-width="1.400"/></svg>Microsoft PowerPoint ...</button>
    <button class="flex w-[101px] items-center gap-[3px] rounded-[2px] border border-[#2b63d4] bg-gradient-to-b from-[#5b9bf9] via-[#3a7ef2] to-[#3877ea] pl-[5px]"><svg class="size-[10px]" viewBox="0 0 10 10"><path d="M2.500 .5h7v9h-7z" fill="#fff" stroke="#51698f" stroke-width=".7"/><path d="M.5 2.500h6v5h-6z" fill="#2f5fb8"/><path d="M1.500 3.500l1 3 1-2.500 1 2.500 1-3" fill="none" stroke="#fff" stroke-width=".8"/></svg>0x - 746 Conceptrap...</button>
    <button class="flex w-[103px] items-center gap-[3px] rounded-[2px] border border-[#163c96] bg-[#1e4fb5] pl-[5px]"><svg class="size-[10px]" viewBox="0 0 10 10"><rect x=".5" y=".5" width="9" height="9" rx="1" fill="#e9f5de" stroke="#4f9a3c"/><path d="M3 2.500l4 5M7 2.500l-4 5" stroke="#2f7d2a" stroke-width="1.500"/></svg>Microsoft Excel niet-c...</button>
  </div>
  <span class="flex items-center pr-[7px]">EN</span>
  <div class="flex w-[60px] shrink-0 items-center gap-[2px] border-l border-[#0c5fb8] bg-gradient-to-b from-[#29b4f5] via-[#129aea] to-[#1290e0]">
    <button aria-label="Verborgen pictogrammen" class="-ml-[5px]"><svg class="size-[10px]" viewBox="0 0 10 10"><circle cx="5" cy="5" r="4.500" fill="#2a7de8" stroke="#a6dcff" stroke-width=".7"/><path d="M6.300 2.500L3.800 5l2.500 2.500" fill="none" stroke="#fff" stroke-width="1.300"/></svg></button>
    <svg class="size-[10px]" viewBox="0 0 10 10"><circle cx="4" cy="4" r="3.700" fill="#8cc63f"/><circle cx="6.500" cy="6.500" r="3.200" fill="#b9d432"/><path d="M3 4l2 2.500L8 3.500" fill="none" stroke="#fff" stroke-width="1.300"/></svg>
    <svg class="size-[10px]" viewBox="0 0 10 10"><circle cx="3" cy="3" r="2" fill="#d9e4f2"/><circle cx="7" cy="4" r="2" fill="#8ec06a"/><path d="M1 9q1-5 4-3 4-1 4 3z" fill="#c6d6ea" stroke="#51698f" stroke-width=".5"/></svg>
    <time class="ml-[3px]">11:54</time>
  </div>
</footer>

<script>
const data = {
  2: ['Lage toegangsprijs volwassenen', 1],
  3: ['Goedkoop vervoer', 6],
  4: ['Museum is gratis voor kinderen', 15],
  5: ['Anders: eigen aangegeven reden', 15],
  6: ['Korte afstand van school tot museum', 19],
  7: ['Vervoer naar museum is goed te organiseren', 27],
  8: ['Museum is goed en makkelijk bereikbaar', 31],
  9: ['Er is een leuk aanbod van het museum', 39],
  10: ['Goede aansluiting bij het eigen lesprogramma', 54],
  11: ['Museum is leuk en interessant voor kinderen, leuke activiteiten (rondleiding, speurtocht)', 74],
};
const cell = 'h-px border-b border-r border-[#d0d7e5] p-0 align-top';
const thick = 'h-px border-b-2 border-r border-b-black border-r-[#d0d7e5] p-0 align-top';
const head = 'border-b border-r border-[#9eb6ce] bg-[#dfe9f5] p-0 align-bottom font-normal text-[#27413e]';
const headOn = 'border-b border-r border-[#f29536] bg-[#fbcf80] p-0 align-bottom font-normal text-[#27413e]';
let html = '';
for (let r = 1; r <= 32; r++) {
  const [label, value] = data[r] || ['', r === 1 ? '% dat reden in top-drie plaatst' : ''];
  const inner = r === 11 ? 'h-[17px] px-px pt-px text-justify leading-[9px]' : 'h-[17px] whitespace-nowrap px-px pt-px';
  html += `<tr class="${r % 5 === 0 ? 'h-[20px]' : 'h-[19px]'}">
    <th scope="row" class="${r === 6 ? headOn : head}"><div class="font-['Open_Sans',sans-serif]">${r > 31 ? '' : r}</div></th>
    <td class="${r === 2 ? thick : cell}"><div class="${inner}">${label}</div></td>
    <td class="${r === 11 ? thick : cell}"><div class="h-[17px] px-px pt-px ${r === 1 ? 'text-center' : ''}">${value}</div></td>
    <td class="${r === 11 ? thick : cell}">${r === 6 ? '<div class="relative h-[18px]"><span class="absolute -inset-px border-2 border-black"></span><span class="absolute -bottom-[2px] -right-[2px] size-[4px] border-l border-t border-white bg-black"></span></div>' : ''}</td>
    <td class="${cell}"></td><td class="${cell}"></td><td class="border-b border-[#d0d7e5] p-0"></td></tr>`;
}
document.getElementById('rows').innerHTML = html;

const chart = document.getElementById('chart');
const x0 = 389.5, yTop = 403.5, yEnd = 650.5, unit = 2.885, step = (yEnd - yTop) / 10;
let g = '';
for (let v = 0; v <= 80; v += 10) {
  const x = Math.round(x0 + v * unit) + (v ? 0.5 : -0.5);
  g += `<path d="M${x} ${yTop}V${yEnd + 3}" stroke="#868686"/><text x="${x}" y="667" text-anchor="middle">${v}</text>`;
}
g += `<path d="M386 ${yEnd}H620.500" stroke="#868686"/>`;
for (let i = 0; i < 10; i++) {
  const [label, value] = data[11 - i];
  const y = yTop + step * (i + 0.5);
  g += `<path d="M386 ${Math.round(yTop + step * i) - 0.5}h3.500" stroke="#868686"/>
    <rect x="390" y="${Math.round(y - 5)}" width="${value * unit}" height="10" fill="#4f81bd"/>`;
  g += i === 0
    ? `<text x="271.500" y="414" text-anchor="middle">Museum is leuk en interessant voor kinderen, leuke activiteiten</text><text x="271.500" y="424" text-anchor="middle">(rondleiding, speurtocht)</text>`
    : `<text x="381.500" y="${Math.round(y + 3)}" text-anchor="end">${label}</text>`;
}
chart.insertAdjacentHTML('beforeend', g);
</script>
</body>
</html>
